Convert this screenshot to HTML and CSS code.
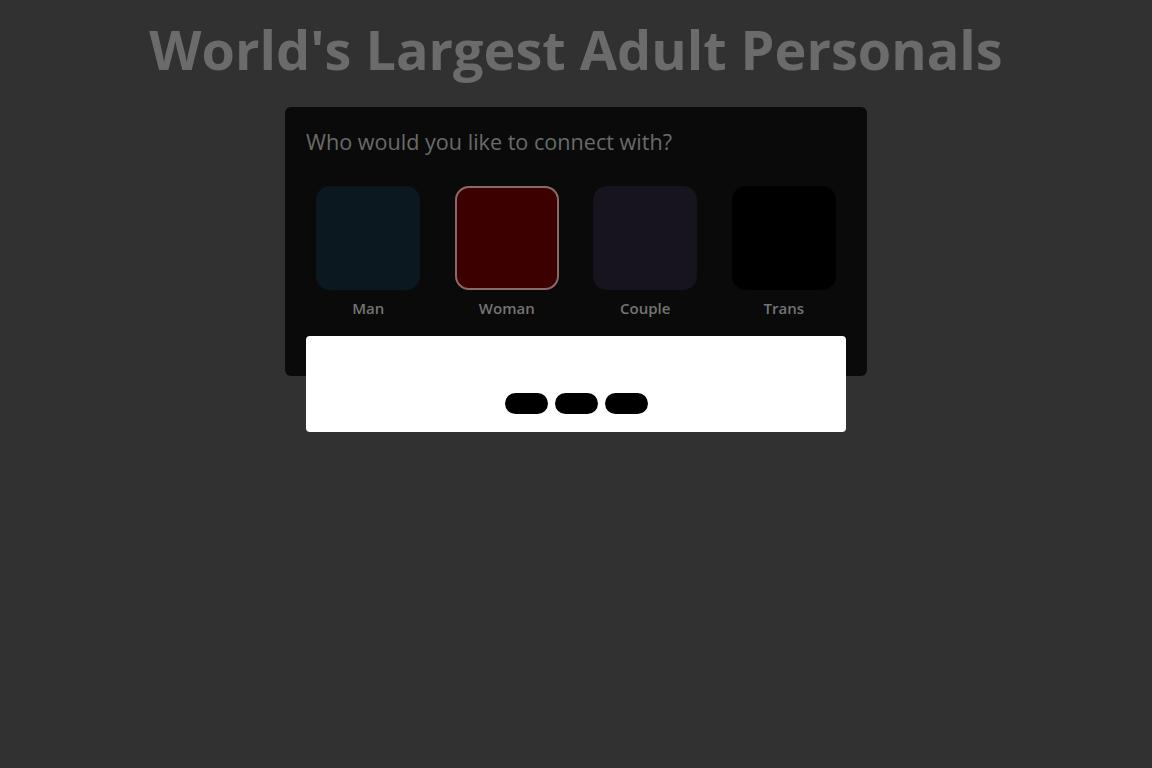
FILE: index.html
```html
<!DOCTYPE html>
<html lang="en">
<head>
<meta charset="utf-8">
<title>World's Largest Adult Personals</title>
<link rel="stylesheet" href="styles.css">
</head>
<body>
<h1 class="title">World's Largest Adult Personals</h1>
<div class="stage">
  <main class="card">
    <h2 class="question">Who would you like to connect with?</h2>
    <div class="choices">
      <div class="choice"><div class="tile tile-man"></div><span class="label">Man</span></div>
      <div class="choice"><div class="tile tile-woman"></div><span class="label">Woman</span></div>
      <div class="choice"><div class="tile tile-couple"></div><span class="label">Couple</span></div>
      <div class="choice"><div class="tile tile-trans"></div><span class="label">Trans</span></div>
    </div>
  </main>
  <div class="modal">
    <div class="loader">
      <span class="pill"></span><span class="pill"></span><span class="pill"></span>
    </div>
  </div>
</div>
</body>
</html>
```

FILE: styles.css
```css
html, body {
  margin: 0;
  padding: 0;
  background: #313131;
  font-family: "Open Sans", "Liberation Sans", sans-serif;
}

body {
  min-height: 100vh;
}

.title {
  margin: 0;
  padding-top: 12px;
  font-size: 54px;
  line-height: 75px;
  font-weight: 700;
  color: #6b6b6b;
  text-align: center;
}

.stage {
  width: 582px;
  margin: 20px auto 0;
  display: flex;
  flex-direction: column;
  align-items: center;
}

.card {
  box-sizing: border-box;
  width: 582px;
  height: 269px;
  padding: 18px 14px 0;
  background: #0a0a0a;
  border-radius: 6px;
}

.question {
  margin: 0 0 0 7px;
  font-size: 21.6px;
  line-height: 34px;
  font-weight: 400;
  color: #6a6a6a;
}

.choices {
  display: grid;
  grid-template-columns: repeat(4, 1fr);
  margin-top: 27px;
}

.choice {
  display: flex;
  flex-direction: column;
  align-items: center;
}

.tile {
  box-sizing: border-box;
  width: 104px;
  height: 104px;
  border-radius: 14px;
}

.tile-man { background: #0b1820; }
.tile-woman { background: #3d0000; border: 2px solid #8a6a66; }
.tile-couple { background: #17131f; }
.tile-trans { background: #000000; }

.label {
  margin-top: 7px;
  font-size: 15px;
  line-height: 22px;
  font-weight: 600;
  color: #747474;
}

.modal {
  position: relative;
  z-index: 1;
  margin-top: -40px;
  box-sizing: border-box;
  width: 540px;
  height: 96px;
  padding-bottom: 18px;
  background: #ffffff;
  border-radius: 4px;
  display: flex;
  align-items: flex-end;
  justify-content: center;
}

.loader {
  display: flex;
  gap: 7px;
}

.pill {
  width: 43px;
  height: 21px;
  border-radius: 11px;
  background: #000000;
}
```
